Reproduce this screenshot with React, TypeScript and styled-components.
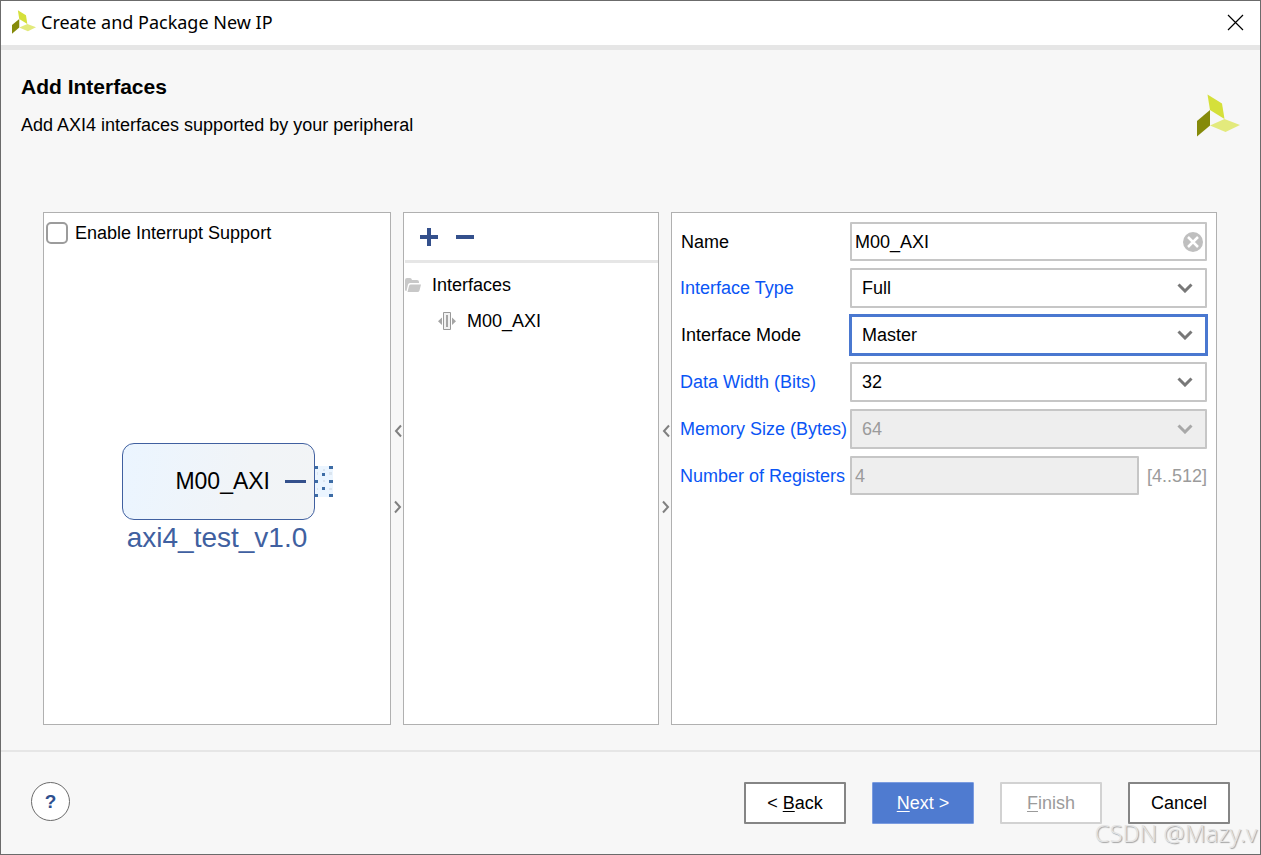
import React from "react";
import styled, { createGlobalStyle, css } from "styled-components";

const GlobalStyle = createGlobalStyle`
  *, *::before, *::after { box-sizing: border-box; }
  body { margin: 0; background: #f7f7f7; }
  body, button, input, select { font-family: "Liberation Sans", Arial, sans-serif; font-size: 18px; line-height: 20px; color: #000; }
`;

const Dialog = styled.div`
  position: relative;
  display: flex;
  flex-direction: column;
  min-height: 100vh;
  border: 1px solid #6b6b6b;
  background: #f7f7f7;
`;

const TitleBar = styled.header`
  display: flex;
  align-items: center;
  gap: 5px;
  height: 49px;
  padding: 0 16px 2px 11px;
  background: #fff;
  border-bottom: 5px solid #e6e6e6;
`;

const WindowTitle = styled.span`
  flex: 1;
  font-family: "Noto Sans", "Open Sans", sans-serif;
  font-size: 18px;
  line-height: 24px;
`;

const PlainButton = styled.button`
  display: inline-flex;
  align-items: center;
  justify-content: center;
  padding: 0;
  border: 0;
  background: none;
  cursor: pointer;
`;

const Intro = styled.section`
  display: flex;
  justify-content: space-between;
  align-items: flex-start;
  padding: 25px 20px 0;
`;

const Heading = styled.h1`
  margin: 0;
  font-size: 21px;
  line-height: 24px;
`;

const Subtitle = styled.p`
  margin: 16px 0 0;
  line-height: 20px;
`;

const BrandMark = styled.div`
  display: flex;
  padding-top: 19px;
`;

const Workspace = styled.main`
  display: flex;
  flex: 1;
  padding: 75px 43px 25px 42px;
`;

const Panel = styled.section<{ $width?: number }>`
  display: flex;
  flex-direction: column;
  ${(p) => (p.$width ? css`flex: 0 0 ${p.$width}px;` : css`flex: 1; min-width: 0;`)}
  background: #fff;
  border: 1px solid #b0b0b0;
`;

const Splitter = styled.div`
  display: flex;
  flex-direction: column;
  align-items: center;
  justify-content: center;
  gap: 60px;
  width: 12px;
  padding-left: 2px;
  button { width: 10px; height: 16px; }
`;

const CheckLabel = styled.label`
  display: flex;
  align-items: center;
  gap: 7px;
  padding: 9px 3px 0 2px;
`;

const CheckBox = styled.input`
  appearance: none;
  width: 22px;
  height: 22px;
  margin: 0;
  border: 2px solid #9c9c9c;
  border-radius: 5px;
  background: #fff;
`;

const Preview = styled.div`
  display: flex;
  flex: 1;
  flex-direction: column;
  align-items: center;
  justify-content: center;
  padding-top: 30px;
`;

const IpBlock = styled.div`
  position: relative;
  display: flex;
  align-items: center;
  justify-content: flex-end;
  gap: 15px;
  width: 193px;
  height: 77px;
  padding-right: 8px;
  margin-left: 3px;
  border: 1px solid #4060a0;
  border-radius: 12px;
  background: linear-gradient(100deg, #ebf5ff, #f1f4f7 65%, #f2f4f6);
  font-size: 23px;
  line-height: 28px;
`;

const PinLine = styled.span`
  width: 21px;
  height: 3px;
  background: #34508c;
`;

const BusPort = styled.svg`
  position: absolute;
  left: 100%;
  top: 22px;
`;

const IpName = styled.div`
  color: #4060a0;
  font-size: 28px;
  line-height: 36px;
`;

const Toolbar = styled.div`
  display: flex;
  align-items: center;
  gap: 18px;
  height: 50px;
  margin-left: 1px;
  padding-left: 15px;
  border-bottom: 3px solid #e6e6e6;
  button { width: 18px; height: 18px; }
`;

const Tree = styled.ul`
  margin: 0;
  padding: 4px 0 0 1px;
  list-style: none;
`;

const TreeItem = styled.li<{ $level: number }>`
  display: flex;
  align-items: center;
  gap: 11px;
  height: 36px;
  padding-left: ${(p) => p.$level * 33}px;
`;

const Form = styled.form`
  display: grid;
  grid-template-columns: 170px minmax(0, 1fr);
  row-gap: 7px;
  align-items: center;
  padding: 9px 9px 0 8px;
`;

const FieldLabel = styled.label<{ $accent?: boolean }>`
  padding-left: ${(p) => (p.$accent ? 0 : 1)}px;
  color: ${(p) => (p.$accent ? "#0a55f5" : "#000")};
  white-space: nowrap;
`;

const FieldRow = styled.div`
  display: flex;
  align-items: center;
  gap: 8px;
`;

const ControlWrap = styled.div`
  position: relative;
  flex: 1;
  min-width: 0;
`;

const controlFrame = css<{ $focused?: boolean }>`
  display: block;
  width: 100%;
  margin: 0;
  border: 2px solid #c6c6c6;
  border-radius: 1px;
  background: #fff;
  outline: none;
  opacity: 1;
  &:disabled { background: #eee; color: #9b9b9b; }
  ${(p) => p.$focused && css`border-color: #4a78d0; border-radius: 0; box-shadow: 0 0 0 1px #4a78d0;`}
`;

const TextInput = styled.input`
  ${controlFrame}
  height: 39px;
  padding: 1px 32px 0 3px;
`;

const Select = styled.select<{ $focused?: boolean }>`
  ${controlFrame}
  appearance: none;
  height: 40px;
  padding: 0 40px 1px 10px;
`;

const Adornment = styled.span<{ $right: number }>`
  position: absolute;
  top: 0;
  bottom: 0;
  right: ${(p) => p.$right}px;
  display: flex;
  align-items: center;
  pointer-events: none;
  button { pointer-events: auto; }
`;

const RangeHint = styled.span`
  color: #9b9b9b;
`;

const Footer = styled.footer`
  display: flex;
  align-items: flex-start;
  gap: 26px;
  height: 104px;
  padding: 30px 30px 0;
  border-top: 2px solid #e6e6e6;
`;

const HelpButton = styled(PlainButton)`
  width: 39px;
  height: 39px;
  margin-right: auto;
  border: 1px solid #6b6b6b;
  border-radius: 50%;
  background: #fff;
  color: #2f4f8f;
  font-size: 19px;
  font-weight: bold;
`;

const ActionButton = styled.button<{ $primary?: boolean }>`
  width: 102px;
  height: 42px;
  padding: 0;
  border: 2px solid #858585;
  border-radius: 1px;
  background: #fff;
  &:disabled { border-color: #d2d2d2; color: #9b9b9b; }
  ${(p) => p.$primary && css`border: 1px solid #7b9ce0; background: #4f7bd0; color: #fff;`}
  u { text-underline-offset: 2px; text-decoration-thickness: 1px; }
`;

const Watermark = styled.span`
  position: absolute;
  right: 3px;
  bottom: 7px;
  color: #e4e4e4;
  font-family: "Noto Sans", sans-serif;
  font-size: 24px;
  font-weight: 300;
  line-height: 28px;
  text-shadow: 1px 1px 1px #a0a0a0;
  pointer-events: none;
`;

const Logo = ({ size }: { size: number }) => (
  <svg width={size} height={size} viewBox="0 0 43 43" aria-hidden="true">
    <path d="M10.500 0.500 25 9.500 27.500 25 13 16Z" fill="#d5e03a" />
    <path d="M0 27 13 16V31.500L0 42.500Z" fill="#858a0a" />
    <path d="M13 31.500 27.500 25 43 31 28.500 38Z" fill="#e3ea7c" />
  </svg>
);

const Arrow = ({ d }: { d: string }) => (
  <svg width="8" height="14" viewBox="0 0 8 14" fill="none" stroke="#808080" strokeWidth="2" aria-hidden="true">
    <path d={d} />
  </svg>
);

const SplitterBar = () => (
  <Splitter>
    <PlainButton type="button" aria-label="Collapse left"><Arrow d="M7 1.500 2 7l5 5.500" /></PlainButton>
    <PlainButton type="button" aria-label="Collapse right"><Arrow d="M1 1.500 6 7l-5 5.500" /></PlainButton>
  </Splitter>
);

const selects = [
  { id: "type", label: "Interface Type", value: "Full", accent: true },
  { id: "mode", label: "Interface Mode", value: "Master", focused: true },
  { id: "width", label: "Data Width (Bits)", value: "32", accent: true },
  { id: "memory", label: "Memory Size (Bytes)", value: "64", accent: true, disabled: true },
];

export default function App() {
  return (
    <Dialog>
      <GlobalStyle />
      <TitleBar>
        <Logo size={24} />
        <WindowTitle>Create and Package New IP</WindowTitle>
        <PlainButton type="button" aria-label="Close">
          <svg width="17" height="17" viewBox="0 0 17 17" stroke="#000" strokeWidth="1.200">
            <path d="M1 1 16 16M16 1 1 16" />
          </svg>
        </PlainButton>
      </TitleBar>

      <Intro>
        <div>
          <Heading>Add Interfaces</Heading>
          <Subtitle>Add AXI4 interfaces supported by your peripheral</Subtitle>
        </div>
        <BrandMark><Logo size={43} /></BrandMark>
      </Intro>

      <Workspace>
        <Panel $width={348}>
          <CheckLabel>
            <CheckBox type="checkbox" />
            Enable Interrupt Support
          </CheckLabel>
          <Preview>
            <IpBlock>
              M00_AXI
              <PinLine />
              <BusPort width="19" height="31" viewBox="0 0 19 31" shapeRendering="crispEdges" aria-hidden="true">
                <path d="M1 0H19V31H1Z" fill="#ebf5ff" />
                <path d="M3 6h1v3H3zM9 3h2v2H9zM15 6h3v3h-3zM9 14h2v2H9zM3 22h1v2H3zM15 22h3v2h-3z" fill="#dbe5ef" />
                <path d="M1 0h3v3H1zM15 0h4v3h-4zM8 7h3v3H8zM1 14h3v3H1zM15 14h4v3h-4zM8 21h3v3H8zM1 28h3v3H1zM15 28h4v3h-4z" fill="#3d6ca5" />
              </BusPort>
            </IpBlock>
            <IpName>axi4_test_v1.0</IpName>
          </Preview>
        </Panel>

        <SplitterBar />

        <Panel $width={256}>
          <Toolbar>
            <PlainButton type="button" aria-label="Add interface">
              <svg width="18" height="18" viewBox="0 0 18 18" fill="#34508c"><path d="M7 0h4v7h7v4h-7v7H7v-7H0V7h7z" /></svg>
            </PlainButton>
            <PlainButton type="button" aria-label="Remove interface">
              <svg width="18" height="18" viewBox="0 0 18 18" fill="#34508c"><path d="M0 7h18v4H0z" /></svg>
            </PlainButton>
          </Toolbar>
          <Tree>
            <TreeItem $level={0}>
              <svg width="16" height="14" viewBox="0 0 16 14" fill="#c8c8c8" aria-hidden="true">
                <path d="M0 12V2Q0 0 2 0H5Q6.500 0 7 2H12Q14 2 14 4V5H5Q3.500 5 3 6.500L1.500 13Q0 13 0 12Z" />
                <path d="M5.500 6.500H16L14.500 12.500Q14 14 12.500 14H2.500L4 8Q4.300 6.500 5.500 6.500Z" />
              </svg>
              Interfaces
            </TreeItem>
            <TreeItem $level={1}>
              <svg width="18" height="18" viewBox="0 0 18 18" aria-hidden="true">
                <path d="M5.500 .5H12.500V17.500H5.500Z" fill="#f2f2f2" stroke="#999" />
                <path d="M8 3h2v12H8zM4 5.500V13L0 9.200ZM14 5.500V13L18 9.200Z" fill="#a5a5a5" />
              </svg>
              M00_AXI
            </TreeItem>
          </Tree>
        </Panel>

        <SplitterBar />

        <Panel>
          <Form onSubmit={(e) => e.preventDefault()}>
            <FieldLabel htmlFor="name">Name</FieldLabel>
            <ControlWrap>
              <TextInput id="name" type="text" defaultValue="M00_AXI" />
              <Adornment $right={4}>
                <PlainButton type="button" aria-label="Clear name">
                  <svg width="20" height="20" viewBox="0 0 20 20">
                    <circle cx="10" cy="10" r="10" fill="#bfbfbf" />
                    <path d="M5 5 15 15M15 5 5 15" stroke="#fff" strokeWidth="2.500" />
                  </svg>
                </PlainButton>
              </Adornment>
            </ControlWrap>

            {selects.map((s) => (
              <React.Fragment key={s.id}>
                <FieldLabel htmlFor={s.id} $accent={s.accent}>{s.label}</FieldLabel>
                <ControlWrap>
                  <Select id={s.id} defaultValue={s.value} disabled={s.disabled} $focused={s.focused}>
                    <option>{s.value}</option>
                  </Select>
                  <Adornment $right={14}>
                    <svg width="16" height="10" viewBox="0 0 16 10" fill="none" stroke={s.disabled ? "#a8a8a8" : "#787878"} strokeWidth="3" aria-hidden="true">
                      <path d="M1.500 1.500 8 8 14.500 1.500" />
                    </svg>
                  </Adornment>
                </ControlWrap>
              </React.Fragment>
            ))}

            <FieldLabel htmlFor="registers" $accent>Number of Registers</FieldLabel>
            <FieldRow>
              <ControlWrap>
                <TextInput id="registers" type="text" defaultValue="4" disabled />
              </ControlWrap>
              <RangeHint>[4..512]</RangeHint>
            </FieldRow>
          </Form>
        </Panel>
      </Workspace>

      <Footer>
        <HelpButton type="button" aria-label="Help">?</HelpButton>
        <ActionButton type="button">&lt; <u>B</u>ack</ActionButton>
        <ActionButton type="button" $primary><u>N</u>ext &gt;</ActionButton>
        <ActionButton type="button" disabled><u>F</u>inish</ActionButton>
        <ActionButton type="button">Cancel</ActionButton>
      </Footer>
      <Watermark>CSDN @Mazy.v</Watermark>
    </Dialog>
  );
}
